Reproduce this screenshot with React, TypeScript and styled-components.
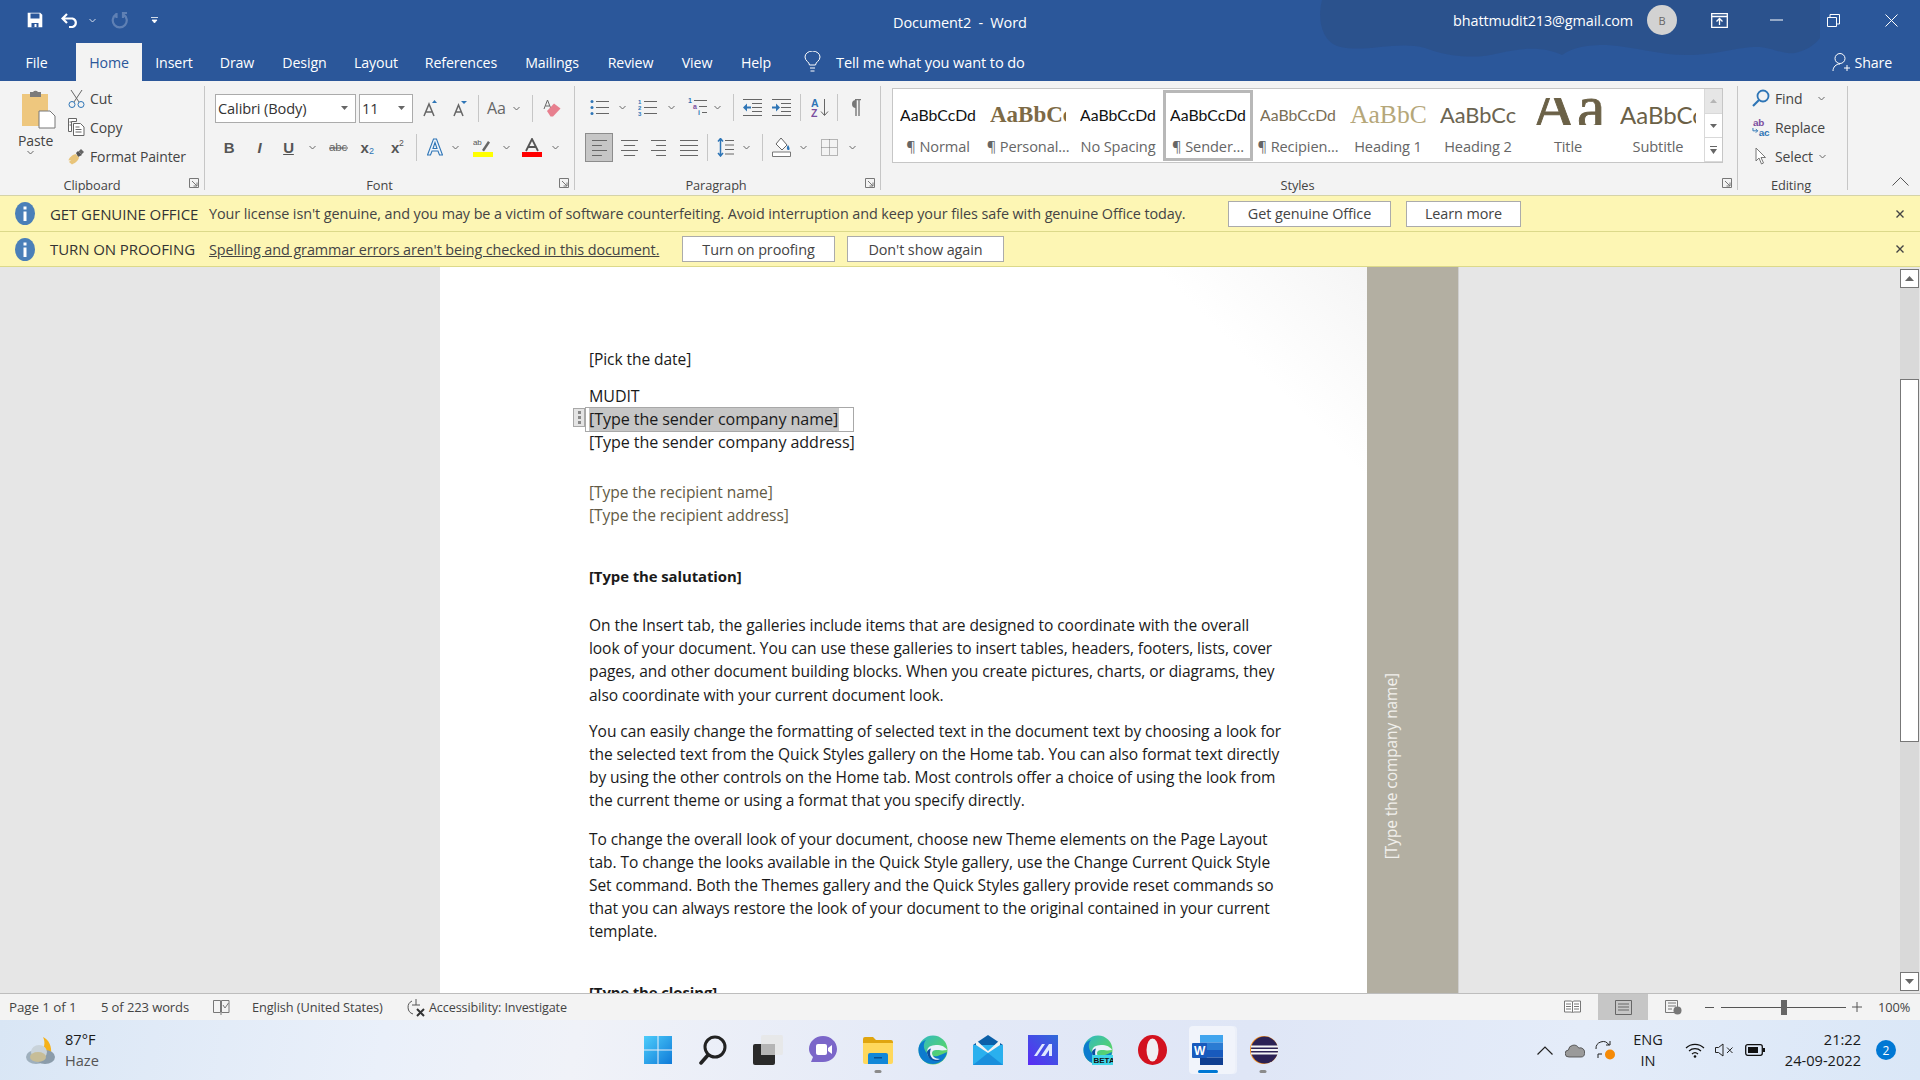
import styled, { createGlobalStyle } from 'styled-components'

const UI = `"Open Sans", "Noto Sans", sans-serif`

const Global = createGlobalStyle`
  html, body { margin: 0; padding: 0; background: #e6e6e6; }
  * { box-sizing: border-box; }
  body { font-family: ${UI}; overflow: hidden; }
`

const Window = styled.div`
  width: 1920px;
  height: 1080px;
  display: flex;
  flex-direction: column;
  overflow: hidden;
`

const Banner = styled.div`
  position: relative;
  background: #2b579a;
  flex: none;
  height: 81px;
  color: #fff;
`

const BannerArt = styled.svg`
  position: absolute;
  inset: 0;
`

const TitleRow = styled.div`
  position: relative;
  height: 43px;
  display: flex;
  align-items: center;
  padding-left: 27px;
  padding-bottom: 3px;
`

const Tool = styled.div<{ $w: number; $ml?: number; $h?: number; $on?: boolean; $flat?: boolean }>`
  flex: none;
  display: flex;
  align-items: center;
  justify-content: center;
  width: ${p => p.$w}px;
  height: ${p => (p.$h ? `${p.$h}px` : 'auto')};
  margin-left: ${p => p.$ml ?? 0}px;
  background: ${p => (p.$on ? '#c6c6c6' : 'transparent')};
  border: ${p => (p.$on && !p.$flat ? '1px solid #8c8c8c' : 'none')};
`

const DocName = styled.div`
  position: absolute;
  left: 893px;
  top: 13px;
  font-size: 14.5px;
  line-height: 20px;
  letter-spacing: -0.1px;
  white-space: pre;
`

const Account = styled.div`
  font-size: 14.4px;
  margin-left: auto;
  letter-spacing: -0.1px;
  white-space: nowrap;
`

const Avatar = styled.div`
  width: 30px;
  height: 30px;
  border-radius: 50%;
  background: #d2d2d2;
  color: #666;
  font-size: 11px;
  display: flex;
  align-items: center;
  justify-content: center;
  margin-left: 14px;
`

const TabRow = styled.div`
  position: relative;
  height: 38px;
  display: flex;
  align-items: stretch;
  font-size: 14.2px;
  letter-spacing: -0.12px;
`

const Tab = styled.div<{ $w: number; $ml?: number; $on?: boolean }>`
  width: ${p => p.$w}px;
  margin-left: ${p => p.$ml ?? 0}px;
  display: flex;
  align-items: center;
  justify-content: center;
  padding-top: 1px;
  background: ${p => (p.$on ? '#f3f3f3' : 'transparent')};
  color: ${p => (p.$on ? '#2b579a' : '#fff')};
`

const TellMe = styled.div`
  display: flex;
  align-items: center;
  margin-left: 18px;
  gap: 15px;
  white-space: nowrap;
  font-size: 14.6px;
`

const Share = styled.div`
  display: flex;
  align-items: center;
  gap: 3px;
  margin-left: auto;
  margin-right: 28px;
`

const Ribbon = styled.div`
  flex: none;
  height: 115px;
  background: #f3f3f3;
  border-bottom: 1px solid #d5d3a8;
  display: flex;
  padding-top: 5px;
  color: #444;
  font-size: 14px;
  letter-spacing: -0.12px;
`

const Group = styled.div<{ $w: number }>`
  position: relative;
  flex: none;
  width: ${p => p.$w}px;
  height: 104px;
  border-right: 1px solid #c6c6c6;
  display: flex;
  flex-direction: column;
`

const GroupLabel = styled.div<{ $pr: number }>`
  margin-top: auto;
  margin-bottom: -3px;
  height: 16px;
  line-height: 16px;
  font-size: 12.8px;
  letter-spacing: -0.1px;
  text-align: center;
  padding-right: ${p => p.$pr}px;
`

const Launcher = styled.svg`
  position: absolute;
  right: 5px;
  bottom: 2px;
`

const Row = styled.div<{ $mt: number }>`
  display: flex;
  align-items: center;
  height: 30px;
  margin-top: ${p => p.$mt}px;
`

const ClipBody = styled.div`
  display: flex;
`

const PasteCol = styled.div`
  width: 67px;
  flex: none;
  display: flex;
  flex-direction: column;
  align-items: center;
  padding-top: 4px;
`

const PasteLabel = styled.div`
  line-height: 16px;
  margin-top: 4px;
  margin-bottom: 1px;
  align-self: flex-start;
  padding-left: 18px;
`

const ActionCol = styled.div<{ $ml?: number }>`
  display: flex;
  flex-direction: column;
  gap: 5px;
  margin-left: ${p => p.$ml ?? 0}px;
`

const Action = styled.div`
  height: 24px;
  display: flex;
  align-items: center;
  white-space: nowrap;
`

const ActionIcon = styled.div`
  width: 18px;
  margin-right: 5px;
  display: flex;
  justify-content: center;
`

const Combo = styled.div<{ $w: number; $ml: number }>`
  width: ${p => p.$w}px;
  height: 29px;
  margin-left: ${p => p.$ml}px;
  background: #fff;
  border: 1px solid #ababab;
  display: flex;
  align-items: center;
  justify-content: space-between;
  padding: 0 7px 0 2px;
  font-size: 14.6px;
  color: #333;
`

const ToolSep = styled.div<{ $ml: number }>`
  width: 1px;
  height: 27px;
  background: #c6c6c6;
  flex: none;
  margin-left: ${p => p.$ml}px;
`

const Bold = styled.span<{ $ital?: boolean; $under?: boolean }>`
  font-family: "Liberation Sans", sans-serif;
  font-weight: 700;
  font-size: 15px;
  color: #555;
  font-style: ${p => (p.$ital ? 'italic' : 'normal')};
  text-decoration: ${p => (p.$under ? 'underline' : 'none')};
`

const ChangeCase = styled.span`
  font-size: 16px;
  color: #666;
`

const Gallery = styled.div`
  margin: 2px 0 0 11px;
  width: 831px;
  height: 75px;
  background: #fff;
  border: 1px solid #c6c6c6;
  display: flex;
`

const StyleItem = styled.div<{ $on?: boolean }>`
  width: 90px;
  flex: none;
  height: ${p => (p.$on ? '71px' : '73px')};
  margin-top: ${p => (p.$on ? '1px' : '0')};
  border: ${p => (p.$on ? '3px solid #b8b8b8' : '3px solid transparent')};
  display: flex;
  flex-direction: column;
  align-items: center;
  overflow: hidden;
  padding-top: ${p => (p.$on ? '5px' : '6px')};
`

const Sample = styled.div<{ $font?: string; $size: number; $color?: string; $weight?: number; $lh?: number; $clip?: boolean }>`
  height: 30px;
  width: 76px;
  flex: none;
  overflow: hidden;
  text-align: ${p => (p.$clip ? 'left' : 'center')};
  white-space: nowrap;
  font-family: ${p => p.$font ?? '"Lato", sans-serif'};
  font-size: ${p => p.$size}px;
  font-weight: ${p => p.$weight ?? 400};
  line-height: ${p => p.$lh ?? 34}px;
  letter-spacing: 0;
  color: ${p => p.$color ?? '#111'};
`

const TitleSample = styled(Sample)`
  height: 27px;
  margin-bottom: 3px;
  -webkit-text-stroke: 0.9px #6b6147;
`

const StyleName = styled.div`
  margin-top: 9px;
  font-size: 14.6px;
  line-height: 18px;
  color: #666;
  white-space: nowrap;
`

const GalleryScroll = styled.div`
  margin-left: auto;
  width: 18px;
  display: flex;
  flex-direction: column;
  gap: 1px;
  border-left: 1px solid #d9d9d9;
`

const GalleryBtn = styled.div<{ $h: number; $off?: boolean }>`
  height: ${p => p.$h}px;
  display: flex;
  align-items: center;
  justify-content: center;
  background: ${p => (p.$off ? '#e6e6e6' : '#fff')};
  border-bottom: 1px solid #d9d9d9;
`

const Collapse = styled.div`
  margin-left: 44px;
  align-self: flex-end;
  margin-bottom: 5px;
`

const NoticeBar = styled.div<{ $h: number }>`
  flex: none;
  height: ${p => p.$h}px;
  background: #fdf6b4;
  border-bottom: 1px solid #dcd98a;
  display: flex;
  align-items: center;
  padding-left: 15px;
  font-size: 14.4px;
  letter-spacing: -0.08px;
  color: #444;
`

const NoticeTitle = styled.div`
  margin-left: 15px;
  width: 159px;
  flex: none;
  color: #333;
  white-space: nowrap;
  font-size: 15px;
`

const NoticeText = styled.div<{ $link?: boolean; $w: number }>`
  width: ${p => p.$w}px;
  flex: none;
  white-space: nowrap;
  text-decoration: ${p => (p.$link ? 'underline' : 'none')};
`

const NoticeBtn = styled.div<{ $w: number; $ml: number }>`
  width: ${p => p.$w}px;
  margin-left: ${p => p.$ml}px;
  height: 26px;
  flex: none;
  background: #fff;
  border: 1px solid #ababab;
  display: flex;
  align-items: center;
  justify-content: center;
  white-space: nowrap;
`

const NoticeClose = styled.div`
  margin-left: auto;
  margin-right: 15px;
  display: flex;
`

const Workspace = styled.div`
  flex: 1;
  min-height: 0;
  display: flex;
  background: #e6e6e6;
`

const Page = styled.div`
  margin-left: 440px;
  width: 927px;
  flex: none;
  background: linear-gradient(225deg, #f5f5f5 0, #fff 150px);
  padding: 81px 0 0 149px;
  overflow: hidden;
  color: #1a1a1a;
  font-size: 15.55px;
  letter-spacing: -0.08px;
`

const Line = styled.div<{ $mt?: number; $color?: string; $bold?: boolean; $size?: number }>`
  line-height: 23px;
  height: 23px;
  margin-top: ${p => p.$mt ?? 0}px;
  color: ${p => p.$color ?? 'inherit'};
  font-weight: ${p => (p.$bold ? 700 : 400)};
  font-size: ${p => (p.$size ? `${p.$size}px` : 'inherit')};
  white-space: nowrap;
`

const Para = styled.div<{ $mt: number }>`
  margin-top: ${p => p.$mt}px;
  line-height: 23.2px;
  white-space: pre;
`

const Control = styled.div`
  position: relative;
  margin-left: -4px;
  padding-left: 3px;
  width: 269px;
  height: 25px;
  margin-top: -1px;
  margin-bottom: -1px;
  line-height: 23px;
  border: 1px solid #a8a8a8;
  font-size: 16.1px;
  white-space: nowrap;
`

const Selected = styled.span`
  display: inline-block;
  background: #c6c6c6;
  padding-right: 1px;
`

const Handle = styled.div`
  position: absolute;
  left: -13px;
  top: 0;
  width: 12px;
  height: 19px;
  background: #e4e4e4;
  border: 1px solid #a8a8a8;
  display: flex;
  flex-direction: column;
  align-items: center;
  justify-content: center;
  gap: 2px;

  i {
    width: 3px;
    height: 3px;
    background: #888;
  }
`

const Sidebar = styled.div`
  width: 92px;
  flex: none;
  background: #b3afa2;
  border-right: 1px solid #cfcfcf;
  padding: 406px 0 0 13px;
  color: #f1f0ec;
  font-size: 15.5px;
`

const SideText = styled.div`
  writing-mode: vertical-rl;
  transform: rotate(180deg);
  white-space: nowrap;
  letter-spacing: -0.08px;
`

const Scrollbar = styled.div`
  margin-left: auto;
  margin-right: 1px;
  width: 19px;
  margin-top: 2px;
  display: flex;
  flex-direction: column;
`

const ScrollBtn = styled.div`
  height: 19px;
  flex: none;
  background: #fff;
  border: 1px solid #777;
  display: flex;
  align-items: center;
  justify-content: center;
`

const Track = styled.div<{ $h: number }>`
  height: ${p => p.$h}px;
  background: #d9d9d9;
  flex: none;
`

const Thumb = styled.div`
  height: 363px;
  background: #fff;
  border: 1px solid #777;
  flex: none;
`

const StatusBar = styled.div`
  flex: none;
  height: 27px;
  background: #f3f3f3;
  border-top: 1px solid #bdbdbd;
  display: flex;
  align-items: center;
  font-size: 12.8px;
  letter-spacing: -0.1px;
  color: #444;
  white-space: nowrap;
`

const StatusItem = styled.div<{ $w: number; $ml?: number; $size?: number }>`
  width: ${p => p.$w}px;
  margin-left: ${p => p.$ml ?? 0}px;
  flex: none;
  display: flex;
  align-items: center;
  font-size: ${p => (p.$size ? `${p.$size}px` : 'inherit')};
`

const ZoomTrack = styled.div`
  position: relative;
  width: 125px;
  height: 1px;
  background: #555;
  margin-left: 7px;
`

const ZoomThumb = styled.div`
  position: absolute;
  left: 60px;
  top: -7px;
  width: 6px;
  height: 15px;
  background: #666;
`

const Taskbar = styled.div`
  flex: none;
  height: 60px;
  display: flex;
  align-items: center;
  background: linear-gradient(100deg, #d9e6f5 0, #eaf0fa 20%, #f0f2f8 30%, #e3e9f7 50%, #dfe6f6 65%, #e4ecf9 82%, #dae7f7 100%);
  color: #1a1a1a;
  font-size: 14.6px;
`

const Weather = styled.div`
  width: 630px;
  flex: none;
  display: flex;
  align-items: center;
  padding-left: 26px;
  gap: 10px;
`

const WeatherText = styled.div`
  line-height: 21px;
  span {
    display: block;
    color: #555;
  }
`

const Slot = styled.div`
  position: relative;
  width: 55px;
  height: 60px;
  flex: none;
  display: flex;
  align-items: center;
  justify-content: center;
`

const ActiveTile = styled.div`
  position: absolute;
  left: 9px;
  top: 6px;
  width: 46px;
  height: 48px;
  background: rgba(255, 255, 255, 0.55);
  border-radius: 4px;
  box-shadow: 2px 0 0 rgba(255, 255, 255, 0.4);
`

const Dot = styled.div<{ $active?: boolean }>`
  position: absolute;
  bottom: 7px;
  left: 50%;
  transform: translateX(-50%);
  width: ${p => (p.$active ? '20px' : '7px')};
  height: 3px;
  border-radius: 2px;
  background: ${p => (p.$active ? '#0078d4' : '#8b8b8b')};
`

const SlotIcon = styled.div`
  position: relative;
  display: flex;
`

const BetaTag = styled.svg`
  position: absolute;
  left: 9px;
  bottom: 0;
`

const Tray = styled.div`
  margin-left: auto;
  display: flex;
  align-items: center;
  padding-right: 24px;
`

const TrayItem = styled.div<{ $ml: number; $w: number }>`
  margin-left: ${p => p.$ml}px;
  width: ${p => p.$w}px;
  flex: none;
  display: flex;
  justify-content: center;
`

const Lang = styled.div<{ $ml: number }>`
  margin-left: ${p => p.$ml}px;
  width: 30px;
  text-align: center;
  line-height: 21px;
`

const Clock = styled.div`
  margin-left: 6px;
  width: 90px;
  text-align: right;
  line-height: 21px;
  white-space: nowrap;
`

const Badge = styled.div`
  margin-left: 15px;
  width: 20px;
  height: 20px;
  border-radius: 50%;
  background: #0078d4;
  color: #fff;
  font-size: 12px;
  display: flex;
  align-items: center;
  justify-content: center;
`

const Chev = ({ ml = 0, c = '#666' }: { ml?: number; c?: string }) => (
  <Tool $w={7} $ml={ml}>
    <svg width="7" height="5" viewBox="0 0 7 5"><path d="M.5 1 3.5 4 6.5 1" fill="none" stroke={c} /></svg>
  </Tool>
)

const Caret = () => (
  <svg width="7" height="4" viewBox="0 0 7 4"><path d="M0 0h7L3.500 4z" fill="#666" /></svg>
)

const Launch = () => (
  <Launcher width="10" height="10" viewBox="0 0 10 10">
    <path d="M.5.5h9v9h-9zM3 3l5 5M8 4.500V8H4.500" fill="none" stroke="#777" />
  </Launcher>
)

const Lines = ({ n, w, s = 5, c = '#666', align = 'left' }: { n: number; w: number; s?: number; c?: string; align?: string }) => (
  <>
    {Array.from({ length: n }).map((_, i) => {
      const short = i % 2 === 1 && align !== 'just'
      const len = short ? w * 0.66 : w
      const x0 = align === 'center' ? (w - len) / 2 : align === 'right' ? w - len : 0
      return <path key={i} d={`M${x0} ${i * s + 1.5}h${len}`} stroke={c} strokeWidth="1" />
    })}
  </>
)

const AlignIcon = ({ align, w }: { align: string; w: number }) => (
  <svg width={w} height="17" viewBox={`0 0 ${w} 17`}><Lines n={4} w={w} align={align} /></svg>
)

const InfoIcon = () => (
  <svg width="20" height="23" viewBox="0 0 20 23"><ellipse cx="10" cy="11.500" rx="10" ry="11.500" fill="#4a7fb8" /><path d="M8.500 9.500h3V19h-3zM8.500 4.500h3v3h-3z" fill="#fff" /></svg>
)

const CloseX = () => (
  <svg width="10" height="10" viewBox="0 0 10 10"><path d="M1.500 1.500l7 7M8.500 1.500l-7 7" stroke="#444" strokeWidth="1.400" /></svg>
)

const EdgeIcon = ({ beta }: { beta?: boolean }) => (
  <svg width="30" height="30" viewBox="0 0 30 30">
    <defs>
      <linearGradient id={beta ? 'eb' : 'ea'} x1="0" y1="0" x2="1" y2="1">
        <stop offset="0" stopColor="#2fb7c9" /><stop offset=".6" stopColor="#4fcf7a" /><stop offset="1" stopColor="#7ad94f" />
      </linearGradient>
    </defs>
    <circle cx="15" cy="15" r="14.500" fill={`url(#${beta ? 'eb' : 'ea'})`} />
    <path d="M29 17c-1 7-7 12-14 12C7 29 .5 23 .5 15 .5 9 4 6 8 5c-3 3-3 9 1 13 4 4 10 4 13 2 3-1 5-2 7-3z" fill="#0c7bce" />
    <path d="M13 11c-4 1-5 6-3 10 2 4 8 5 12 3-5 0-8-3-8-6 0-2 2-3 4-3 3 0 5 1 11 0 0-1-4-5-9-5-3 0-5 0-7 1z" fill="#eaf1fb" />
    <path d="M9 17c0 5 4 9 9 9 2 0 4-.5 5-1.500-3 1-8 1-10-3-1.500-2-1-6 0-8-2 .5-4 2-4 3.500z" fill="#0a4f9e" />
  </svg>
)

function App() {
  return (
    <Window>
      <Global />
      <Banner>
        <BannerArt width="1920" height="81" viewBox="0 0 1920 81">
          <path d="M1322 0c-5 20 0 40 15 46 25 8 60-6 88 2 20 8 50 12 75 5 25-6 45-6 62 2 12-8 25-10 45-10 30 2 50 10 80 10 30 0 50-8 70-8 15 0 25 8 38 6 10-2 20-8 25-15V0z" fill="#2c4f86" opacity=".6" />
        </BannerArt>
        <TitleRow>
          <Tool $w={16}>
            <svg width="16" height="16" viewBox="0 0 16 16"><path d="M.7.7h12.500l2.100 2.100v12.500H.7z" fill="#fff" /><path d="M3.500 1.500h9v5h-9z" fill="#2b579a" /><path d="M4.500 11h7v4.500h-7z" fill="#2b579a" /><path d="M7.500 12h2v3h-2z" fill="#fff" /></svg>
          </Tool>
          <Tool $w={19} $ml={18}>
            <svg width="19" height="16" viewBox="0 0 19 16"><path d="M1.500 6.500h10a5 4.500 0 0 1 0 8.500H8M6 2 1.500 6.500 6 11" fill="none" stroke="#fff" strokeWidth="2.200" /></svg>
          </Tool>
          <Chev ml={9} c="#d5deec" />
          <Tool $w={17} $ml={15}>
            <svg width="17" height="17" viewBox="0 0 17 17"><path d="M5 2.500a7 7 0 1 0 7.500 0M5.500 1v5M12 6V1h4" fill="none" stroke="#5f80b4" strokeWidth="2.200" /></svg>
          </Tool>
          <Tool $w={7} $ml={23}>
            <svg width="7" height="9" viewBox="0 0 7 9"><path d="M0 1.500h7M1 4h5L3.500 7z" fill="#fff" stroke="#fff" strokeWidth=".8" /></svg>
          </Tool>
          <DocName>Document2  -  Word</DocName>
          <Account>bhattmudit213@gmail.com</Account>
          <Avatar>B</Avatar>
          <Tool $w={17} $ml={34}>
            <svg width="17" height="15" viewBox="0 0 17 15"><path d="M.7.7h15.600v13.600H.7zM.7 3.500h15.600" fill="none" stroke="#fff" strokeWidth="1.300" /><path d="M8.500 12V6M5.500 8.500l3-3 3 3" fill="none" stroke="#fff" strokeWidth="1.300" /></svg>
          </Tool>
          <Tool $w={13} $ml={42}>
            <svg width="13" height="2" viewBox="0 0 13 2"><path d="M0 1h13" stroke="#fff" /></svg>
          </Tool>
          <Tool $w={13} $ml={44}>
            <svg width="13" height="13" viewBox="0 0 13 13"><path d="M.5 3.500h9v9h-9zM3 3.500V.5h9.500V10H9.500" fill="none" stroke="#fff" /></svg>
          </Tool>
          <Tool $w={13} $ml={45}>
            <svg width="13" height="13" viewBox="0 0 13 13"><path d="M.5.5l12 12M12.500.5l-12 12" stroke="#fff" /></svg>
          </Tool>
          <Tool $w={22} />
        </TitleRow>
        <TabRow>
          <Tab $w={49} $ml={12}>File</Tab>
          <Tab $w={66} $ml={15} $on>Home</Tab>
          <Tab $w={64}>Insert</Tab>
          <Tab $w={62}>Draw</Tab>
          <Tab $w={73}>Design</Tab>
          <Tab $w={70}>Layout</Tab>
          <Tab $w={100}>References</Tab>
          <Tab $w={82}>Mailings</Tab>
          <Tab $w={75}>Review</Tab>
          <Tab $w={58}>View</Tab>
          <Tab $w={60}>Help</Tab>
          <TellMe>
            <svg width="17" height="22" viewBox="0 0 17 22"><path d="M5.500 14c0-3-4.500-4-4.500-8a7.500 6 0 0 1 15 0c0 4-4.500 5-4.500 8zM6 17h5M6.500 20h4" fill="none" stroke="#fff" /></svg>
            Tell me what you want to do
          </TellMe>
          <Share>
            <svg width="19" height="20" viewBox="0 0 19 20"><circle cx="8" cy="6.500" r="5" fill="none" stroke="#fff" /><path d="M1 19c0-4 3-7 7-7M12 16h6M15 13v6" fill="none" stroke="#fff" /></svg>
            Share
          </Share>
        </TabRow>
      </Banner>

      <Ribbon>
        <Group $w={205}>
          <ClipBody>
            <PasteCol>
              <svg width="34" height="39" viewBox="0 0 34 39" style={{ marginLeft: 11 }}>
                <path d="M0 4h26v32H0z" fill="#eec77e" />
                <path d="M8 2h3a3 3 0 0 1 5 0h3v5H8z" fill="#7b7b7b" />
                <path d="M17 21h11l5 5v12H17z" fill="#fff" stroke="#777" />
              </svg>
              <PasteLabel>Paste</PasteLabel>
              <Chev ml={-6} />
            </PasteCol>
            <ActionCol>
              <Action>
                <ActionIcon>
                  <svg width="17" height="19" viewBox="0 0 17 19"><path d="M3 1l8 12M14 1 6 13" stroke="#666" fill="none" /><circle cx="4" cy="15.500" r="3" fill="none" stroke="#2e75b6" /><circle cx="13" cy="15.500" r="3" fill="none" stroke="#2e75b6" /></svg>
                </ActionIcon>
                Cut
              </Action>
              <Action>
                <ActionIcon>
                  <svg width="17" height="18" viewBox="0 0 17 18"><path d="M.5.5h8v3h-5v10h-3zM5.500 5.500h7l3.500 3.500v8.500H5.500zM7.500 9h4M7.500 11.500h6M7.500 14h6M1.500 4h2M1.500 7h2" fill="#fff" stroke="#666" /></svg>
                </ActionIcon>
                Copy
              </Action>
              <Action>
                <ActionIcon>
                  <svg width="17" height="17" viewBox="0 0 17 17"><path d="M10 3l4 4-4 2-2-4z" fill="#555" /><path d="M13 1l3 3-2.500 2.500-3-3z" fill="#666" /><path d="M7.500 6l3.500 3.500c-1 4-5 6-7 7L1 14l2-2-2.500.5C1 10 4 7 7.500 6z" fill="#e8c47a" /></svg>
                </ActionIcon>
                Format Painter
              </Action>
            </ActionCol>
          </ClipBody>
          <GroupLabel $pr={20}>Clipboard</GroupLabel>
          <Launch />
        </Group>

        <Group $w={370}>
          <Row $mt={7}>
            <Combo $w={141} $ml={10}>Calibri (Body)<Caret /></Combo>
            <Combo $w={54} $ml={3}>11<Caret /></Combo>
            <Tool $w={15} $ml={10}>
              <svg width="15" height="17" viewBox="0 0 15 17"><path d="M1 16 6 4l5 12M3 12h6" fill="none" stroke="#666" strokeWidth="1.500" /><path d="M9 3l2.500-3L14 3z" fill="#2e75b6" /></svg>
            </Tool>
            <Tool $w={14} $ml={15}>
              <svg width="14" height="17" viewBox="0 0 14 17"><path d="M1 16 5.500 5 10 16M2.500 12h6" fill="none" stroke="#666" strokeWidth="1.500" /><path d="M8 1h6l-3 3z" fill="#2e75b6" /></svg>
            </Tool>
            <ToolSep $ml={11} />
            <Tool $w={17} $ml={9}><ChangeCase>Aa</ChangeCase></Tool>
            <Chev ml={8} />
            <ToolSep $ml={12} />
            <Tool $w={18} $ml={10}>
              <svg width="18" height="18" viewBox="0 0 18 18"><path d="M1 10 4.500 1 8 10M2.500 7h4" fill="none" stroke="#666" /><path d="M4 12l7-7.500 6.500 5L10 17.500H7.500z" fill="#e77f8e" /></svg>
            </Tool>
          </Row>
          <Row $mt={9}>
            <Tool $w={10} $ml={19}><Bold>B</Bold></Tool>
            <Tool $w={9} $ml={21}><Bold $ital>I</Bold></Tool>
            <Tool $w={11} $ml={19}><Bold $under>U</Bold></Tool>
            <Chev ml={15} />
            <Tool $w={19} $ml={13}>
              <svg width="19" height="10" viewBox="0 0 19 10"><text x="0" y="9" fontSize="11.500" fill="#666" fontFamily="Liberation Sans">abc</text><path d="M0 6h19" stroke="#555" /></svg>
            </Tool>
            <Tool $w={15} $ml={12}>
              <Bold>x</Bold><svg width="6" height="16" viewBox="0 0 6 16"><text x="0" y="15" fontSize="9" fill="#2e75b6" fontFamily="Liberation Sans">2</text></svg>
            </Tool>
            <Tool $w={14} $ml={16}>
              <Bold>x</Bold><svg width="6" height="16" viewBox="0 0 6 16"><text x="0" y="7" fontSize="9" fill="#555" fontFamily="Liberation Sans">2</text></svg>
            </Tool>
            <ToolSep $ml={11} />
            <Tool $w={16} $ml={10}>
              <svg width="16" height="18" viewBox="0 0 16 18"><path d="M6.500 1h3L15.500 17h-3l-1.500-4H5l-1.500 4H.5zM6 10.500h4L8 4.500z" fill="#eef4fb" fillRule="evenodd" stroke="#2e75b6" strokeWidth="1.100" /></svg>
            </Tool>
            <Chev ml={9} />
            <Tool $w={20} $ml={14}>
              <svg width="20" height="19" viewBox="0 0 20 19"><text x="0" y="7" fontSize="8" fill="#555" fontFamily="Liberation Sans">ab</text><path d="M9 12l6-9 2 1.500-6 9z" fill="#666" /><path d="M0 14h20v5H0z" fill="#ffff00" /></svg>
            </Tool>
            <Chev ml={10} />
            <Tool $w={20} $ml={12}>
              <svg width="20" height="19" viewBox="0 0 20 19"><path d="M4 13 10 1l6 12M6 9h8" fill="none" stroke="#555" strokeWidth="1.800" /><path d="M0 14h20v5H0z" fill="#ff0000" /></svg>
            </Tool>
            <Chev ml={10} />
          </Row>
          <GroupLabel $pr={20}>Font</GroupLabel>
          <Launch />
        </Group>

        <Group $w={306}>
          <Row $mt={6}>
            <Tool $w={19} $ml={15}>
              <svg width="19" height="17" viewBox="0 0 19 17"><path d="M6 2.500h13M6 8.500h13M6 14.500h13" stroke="#666" /><circle cx="2" cy="2.500" r="1.500" fill="#2e75b6" /><circle cx="2" cy="8.500" r="1.500" fill="#2e75b6" /><circle cx="2" cy="14.500" r="1.500" fill="#2e75b6" /></svg>
            </Tool>
            <Chev ml={10} />
            <Tool $w={19} $ml={12}>
              <svg width="19" height="17" viewBox="0 0 19 17"><path d="M6 2.500h13M6 8.500h13M6 14.500h13" stroke="#666" /><g fontSize="6" fill="#2e75b6" fontFamily="Liberation Sans" fontWeight="700"><text x="0" y="5">1</text><text x="0" y="11">2</text><text x="0" y="17">3</text></g></svg>
            </Tool>
            <Chev ml={11} />
            <Tool $w={19} $ml={13}>
              <svg width="19" height="18" viewBox="0 0 19 18"><path d="M6 2.500h13M11 8.500h8M14 14.500h5" stroke="#666" /><g fontSize="7" fontFamily="Liberation Sans" fontWeight="700" fill="#2e75b6"><text x="0" y="5">1</text><text x="5" y="11" fill="#7a4e9e">a</text><text x="10" y="17">i</text></g></svg>
            </Tool>
            <Chev ml={7} />
            <ToolSep $ml={12} />
            <Tool $w={19} $ml={9}>
              <svg width="19" height="17" viewBox="0 0 19 17"><path d="M0 .5h19M9 4.500h10M9 8.500h10M9 12.500h10M0 16.500h19" stroke="#666" /><path d="M0 8.500l4-4v3h4v2H4v3z" fill="#2e75b6" /></svg>
            </Tool>
            <Tool $w={19} $ml={10}>
              <svg width="19" height="17" viewBox="0 0 19 17"><path d="M0 .5h19M9 4.500h10M9 8.500h10M9 12.500h10M0 16.500h19" stroke="#666" /><path d="M8 8.500l-4-4v3H0v2h4v3z" fill="#2e75b6" /></svg>
            </Tool>
            <ToolSep $ml={9} />
            <Tool $w={18} $ml={10}>
              <svg width="18" height="19" viewBox="0 0 18 19"><g fontFamily="Liberation Sans" fontWeight="700" fontSize="10.500"><text x="0" y="9" fill="#2e75b6">A</text><text x="0" y="19" fill="#7a4e9e">Z</text></g><path d="M13.500 1v16M10 13.500l3.500 4 3.500-4" fill="none" stroke="#666" /></svg>
            </Tool>
            <ToolSep $ml={8} />
            <Tool $w={11} $ml={12}>
              <svg width="11" height="17" viewBox="0 0 11 17"><path d="M5 .5h6M9 .5V17M6 .5V17" stroke="#777" fill="none" strokeWidth="1.400" /><path d="M6 1a4 4 0 0 0 0 8z" fill="#777" /></svg>
            </Tool>
          </Row>
          <Row $mt={10}>
            <Tool $w={28} $h={29} $ml={10} $on><AlignIcon align="left" w={15} /></Tool>
            <Tool $w={17} $ml={8}><AlignIcon align="center" w={17} /></Tool>
            <Tool $w={15} $ml={13}><AlignIcon align="right" w={15} /></Tool>
            <Tool $w={18} $ml={14}><AlignIcon align="just" w={18} /></Tool>
            <ToolSep $ml={9} />
            <Tool $w={17} $ml={9}>
              <svg width="17" height="19" viewBox="0 0 17 19"><path d="M8 2.500h9M8 7h9M8 11.500h9M8 16h9" stroke="#666" /><path d="M3.500 1v17M1 3.500l2.500-3 2.500 3M1 15l2.500 3 2.500-3" fill="none" stroke="#2e75b6" strokeWidth="1.500" /></svg>
            </Tool>
            <Chev ml={9} />
            <ToolSep $ml={12} />
            <Tool $w={19} $ml={9}>
              <svg width="19" height="20" viewBox="0 0 19 20"><path d="M9 1l6 7-5 5-6-6z" fill="#fff" stroke="#666" /><path d="M16 8c2 3 2 5 .5 5S14 11 16 8z" fill="#2e75b6" /><path d="M.5 15h18v4.500H.5z" fill="#fff" stroke="#777" /></svg>
            </Tool>
            <Chev ml={9} />
            <Tool $w={17} $ml={14}>
              <svg width="17" height="17" viewBox="0 0 17 17"><path d="M.5.500h16v16H.5zM8.500.500v16M.5 8.500h16" fill="none" stroke="#777" strokeDasharray="1 1" /></svg>
            </Tool>
            <Chev ml={11} />
          </Row>
          <GroupLabel $pr={23}>Paragraph</GroupLabel>
          <Launch />
        </Group>

        <Group $w={857}>
          <Gallery>
            <StyleItem>
              <Sample $size={15.8}>AaBbCcDd</Sample>
              <StyleName>¶ Normal</StyleName>
            </StyleItem>
            <StyleItem>
              <Sample $font='"Liberation Serif", serif' $size={23} $weight={700} $color="#7d6a45" $clip>AaBbCc</Sample>
              <StyleName>¶ Personal...</StyleName>
            </StyleItem>
            <StyleItem>
              <Sample $size={15.8}>AaBbCcDd</Sample>
              <StyleName>No Spacing</StyleName>
            </StyleItem>
            <StyleItem $on>
              <Sample $size={15.8}>AaBbCcDd</Sample>
              <StyleName>¶ Sender...</StyleName>
            </StyleItem>
            <StyleItem>
              <Sample $size={15.8} $color="#7a6e55">AaBbCcDd</Sample>
              <StyleName>¶ Recipien...</StyleName>
            </StyleItem>
            <StyleItem>
              <Sample $font='"Liberation Serif", serif' $size={25.6} $color="#b5a77a">AaBbC</Sample>
              <StyleName>Heading 1</StyleName>
            </StyleItem>
            <StyleItem>
              <Sample $size={21.8} $color="#6b6451">AaBbCc</Sample>
              <StyleName>Heading 2</StyleName>
            </StyleItem>
            <StyleItem>
              <TitleSample $font='"Liberation Serif", serif' $size={64} $color="#6b6147" $lh={20}>Aa</TitleSample>
              <StyleName>Title</StyleName>
            </StyleItem>
            <StyleItem>
              <Sample $size={24} $color="#6b6147" $clip>AaBbCc</Sample>
              <StyleName>Subtitle</StyleName>
            </StyleItem>
            <GalleryScroll>
              <GalleryBtn $h={25} $off>
                <svg width="7" height="4" viewBox="0 0 7 4"><path d="M3.500 0 7 4H0z" fill="#b5b5b5" /></svg>
              </GalleryBtn>
              <GalleryBtn $h={23}><Caret /></GalleryBtn>
              <GalleryBtn $h={23}>
                <svg width="7" height="8" viewBox="0 0 7 8"><path d="M0 0h7v1H0zM0 3h7L3.500 8z" fill="#666" /></svg>
              </GalleryBtn>
            </GalleryScroll>
          </Gallery>
          <GroupLabel $pr={23}>Styles</GroupLabel>
          <Launch />
        </Group>

        <Group $w={110}>
          <ActionCol $ml={14}>
            <Action>
              <ActionIcon>
                <svg width="18" height="18" viewBox="0 0 18 18"><circle cx="11" cy="7" r="5.500" fill="none" stroke="#2e75b6" strokeWidth="1.800" /><path d="M7 11 1 17" stroke="#2e75b6" strokeWidth="2.200" /></svg>
              </ActionIcon>
              Find
              <Chev ml={16} />
            </Action>
            <Action>
              <ActionIcon>
                <svg width="19" height="19" viewBox="0 0 19 19"><g fontSize="10.500" fontWeight="700" fontFamily="Liberation Sans"><text x="1" y="8" fill="#7a4e9e">ab</text><text x="7" y="18" fill="#2e75b6">ac</text></g><path d="M1 10v3h5M4 11l2 2-2 2" fill="none" stroke="#2e75b6" /></svg>
              </ActionIcon>
              Replace
            </Action>
            <Action>
              <ActionIcon>
                <svg width="12" height="18" viewBox="0 0 12 18"><path d="M1 1v13l3-3 2.500 6 2-1-2.500-5.500h4.500z" fill="#fff" stroke="#777" /></svg>
              </ActionIcon>
              Select
              <Chev ml={6} />
            </Action>
          </ActionCol>
          <GroupLabel $pr={3}>Editing</GroupLabel>
        </Group>
        <Collapse>
          <svg width="17" height="9" viewBox="0 0 17 9"><path d="M.5 8.500l8-8 8 8" fill="none" stroke="#555" /></svg>
        </Collapse>
      </Ribbon>

      <NoticeBar $h={36}>
        <InfoIcon />
        <NoticeTitle>GET GENUINE OFFICE</NoticeTitle>
        <NoticeText $w={1019}>Your license isn't genuine, and you may be a victim of software counterfeiting. Avoid interruption and keep your files safe with genuine Office today.</NoticeText>
        <NoticeBtn $w={163} $ml={0}>Get genuine Office</NoticeBtn>
        <NoticeBtn $w={115} $ml={15}>Learn more</NoticeBtn>
        <NoticeClose><CloseX /></NoticeClose>
      </NoticeBar>
      <NoticeBar $h={35}>
        <InfoIcon />
        <NoticeTitle>TURN ON PROOFING</NoticeTitle>
        <NoticeText $w={473} $link>Spelling and grammar errors aren't being checked in this document.</NoticeText>
        <NoticeBtn $w={153} $ml={0}>Turn on proofing</NoticeBtn>
        <NoticeBtn $w={157} $ml={12}>Don't show again</NoticeBtn>
        <NoticeClose><CloseX /></NoticeClose>
      </NoticeBar>

      <Workspace>
        <Page>
          <Line>[Pick the date]</Line>
          <Line $mt={14} $size={16}>MUDIT</Line>
          <Control>
            <Handle><i /><i /><i /></Handle>
            <Selected>[Type the sender company name]</Selected>
          </Control>
          <Line $size={16.1}>[Type the sender company address]</Line>
          <Line $mt={27} $color="#625a45">[Type the recipient name]</Line>
          <Line $color="#625a45">[Type the recipient address]</Line>
          <Line $mt={38} $bold $size={14.9}>[Type the salutation]</Line>
          <Para $mt={26}>{`On the Insert tab, the galleries include items that are designed to coordinate with the overall
look of your document. You can use these galleries to insert tables, headers, footers, lists, cover
pages, and other document building blocks. When you create pictures, charts, or diagrams, they
also coordinate with your current document look.`}</Para>
          <Para $mt={13}>{`You can easily change the formatting of selected text in the document text by choosing a look for
the selected text from the Quick Styles gallery on the Home tab. You can also format text directly
by using the other controls on the Home tab. Most controls offer a choice of using the look from
the current theme or using a format that you specify directly.`}</Para>
          <Para $mt={15}>{`To change the overall look of your document, choose new Theme elements on the Page Layout
tab. To change the looks available in the Quick Style gallery, use the Change Current Quick Style
Set command. Both the Themes gallery and the Quick Styles gallery provide reset commands so
that you can always restore the look of your document to the original contained in your current
template.`}</Para>
          <Line $mt={37} $bold $size={14.9}>[Type the closing]</Line>
        </Page>
        <Sidebar>
          <SideText>[Type the company name]</SideText>
        </Sidebar>
        <Scrollbar>
          <ScrollBtn>
            <svg width="9" height="5" viewBox="0 0 9 5"><path d="M4.500 0 9 5H0z" fill="#666" /></svg>
          </ScrollBtn>
          <Track $h={91} />
          <Thumb />
          <Track $h={230} />
          <ScrollBtn>
            <svg width="9" height="5" viewBox="0 0 9 5"><path d="M0 0h9L4.500 5z" fill="#666" /></svg>
          </ScrollBtn>
        </Scrollbar>
      </Workspace>

      <StatusBar>
        <StatusItem $w={92} $ml={9} $size={13.4}>Page 1 of 1</StatusItem>
        <StatusItem $w={112} $size={13}>5 of 223 words</StatusItem>
        <StatusItem $w={39}>
          <svg width="18" height="15" viewBox="0 0 18 15"><path d="M.5.500h7v12h-7zM8.500.500h7.500v12H8.500zM10 5l2 3 3.500-5M8 13v2" fill="none" stroke="#777" /></svg>
        </StatusItem>
        <StatusItem $w={155}>English (United States)</StatusItem>
        <StatusItem $w={22}>
          <svg width="19" height="19" viewBox="0 0 19 19"><path d="M5 3a7 7 0 0 0 1 13M9 1v6M5 7h8" fill="none" stroke="#555" /><path d="M10 11l7 7M17 11l-7 7" stroke="#333" strokeWidth="2" /></svg>
        </StatusItem>
        <StatusItem $w={140} $size={12.6}>Accessibility: Investigate</StatusItem>
        <StatusItem $w={17} $ml={995}>
          <svg width="17" height="14" viewBox="0 0 17 14"><path d="M.5 1h7l1 1 1-1h7v11h-7l-1 1-1-1h-7zM8.500 2v10M2 4h5M2 6.500h5M2 9h5M10 4h5M10 6.500h5M10 9h5" fill="#fff" stroke="#777" /></svg>
        </StatusItem>
        <Tool $w={50} $h={26} $ml={17} $on $flat>
          <svg width="17" height="15" viewBox="0 0 17 15"><path d="M.5.500h16v14H.5zM3 4h11M3 7h11M3 10h11" fill="none" stroke="#666" /></svg>
        </Tool>
        <StatusItem $w={17} $ml={17}>
          <svg width="17" height="15" viewBox="0 0 17 15"><path d="M.5.500h12v12H.5zM3 3h8M3 6h8M3 9h4" fill="none" stroke="#777" /><circle cx="12.500" cy="10.500" r="4" fill="#777" /></svg>
        </StatusItem>
        <StatusItem $w={9} $ml={23}>
          <svg width="9" height="1" viewBox="0 0 9 1"><path d="M0 .5h9" stroke="#555" /></svg>
        </StatusItem>
        <ZoomTrack><ZoomThumb /></ZoomTrack>
        <StatusItem $w={10} $ml={6}>
          <svg width="10" height="10" viewBox="0 0 10 10"><path d="M0 5h10M5 0v10" stroke="#555" /></svg>
        </StatusItem>
        <StatusItem $w={40} $ml={16}>100%</StatusItem>
      </StatusBar>

      <Taskbar>
        <Weather>
          <svg width="29" height="27" viewBox="0 0 29 27">
            <path d="M17 0c6 3 9 9 8 17l-11-1c4-4 6-10 3-16z" fill="#f5b21b" />
            <ellipse cx="10" cy="20" rx="10" ry="7" fill="#9fb0bd" />
            <ellipse cx="19" cy="20" rx="10" ry="7" fill="#8b9caa" />
            <ellipse cx="13" cy="15" rx="8" ry="7" fill="#c9d3da" />
            <ellipse cx="12" cy="20" rx="8" ry="5" fill="#c7bd97" />
          </svg>
          <WeatherText>
            87°F
            <span>Haze</span>
          </WeatherText>
        </Weather>

        <Slot>
          <svg width="30" height="30" viewBox="0 0 30 30">
            <defs><linearGradient id="win" x1="0" y1="0" x2="1" y2="1"><stop offset="0" stopColor="#4dcdfb" /><stop offset="1" stopColor="#0f7ad8" /></linearGradient></defs>
            <path d="M1 1h13.500v13.500H1zM15.500 1H29v13.500H15.500zM1 15.500h13.500V29H1zM15.500 15.500H29V29H15.500z" fill="url(#win)" />
          </svg>
        </Slot>
        <Slot>
          <svg width="28" height="30" viewBox="0 0 28 30"><circle cx="16" cy="12" r="10" fill="none" stroke="#222" strokeWidth="3" /><path d="M9 20 2 28" stroke="#222" strokeWidth="3.500" strokeLinecap="round" /></svg>
        </Slot>
        <Slot>
          <svg width="30" height="30" viewBox="0 0 30 30"><rect x="0" y="9" width="22" height="21" rx="2" fill="#2a2a2a" /><rect x="8" y="0" width="22" height="20" rx="2" fill="#e7e7e7" opacity=".9" /><rect x="8" y="9" width="14" height="11" fill="#b5b5b5" /></svg>
        </Slot>
        <Slot>
          <svg width="30" height="30" viewBox="0 0 30 30"><path d="M15 1c8 0 14 6 14 13s-6 13-14 13H3l2-5C2 19 1 17 1 14 1 7 7 1 15 1z" fill="#7b66c9" /><rect x="8" y="9" width="11" height="11" rx="2" fill="#fff" /><path d="M20 13l4-3v9l-4-3z" fill="#fff" /></svg>
        </Slot>
        <Slot>
          <SlotIcon>
            <svg width="30" height="28" viewBox="0 0 30 28"><path d="M0 3a2 2 0 0 1 2-2h8l3 3h15a2 2 0 0 1 2 2v3H0z" fill="#e0a50f" /><path d="M0 7h30v19a2 2 0 0 1-2 2H2a2 2 0 0 1-2-2z" fill="#ffd85c" /><path d="M5 19a2 2 0 0 1 2-2h16a2 2 0 0 1 2 2v9H5z" fill="#1287d8" /><path d="M11 21h8v1.500h-8z" fill="#0a4f8f" /></svg>
          </SlotIcon>
          <Dot />
        </Slot>
        <Slot><EdgeIcon /></Slot>
        <Slot>
          <svg width="30" height="30" viewBox="0 0 30 30"><path d="M15 0 30 10v20H0V10z" fill="#0b5fa8" /><path d="M0 10h30v20H0z" fill="#2ab0ee" /><path d="M3 5 15 16 27 5v5L15 18 3 10z" fill="#f2f2f2" /><path d="M0 30 15 18l15 12z" fill="#1a8fdc" /></svg>
        </Slot>
        <Slot>
          <svg width="30" height="30" viewBox="0 0 30 30">
            <defs><linearGradient id="mx" x1="0" y1="1" x2="1" y2="0"><stop offset="0" stopColor="#5b2bf5" /><stop offset="1" stopColor="#2f6bd8" /></linearGradient></defs>
            <rect width="30" height="30" fill="url(#mx)" />
            <path d="M6 21 14 9h3L9 21zM13 21l8-12h3v12h-3v-6l-4 6z" fill="#dfe8ff" />
          </svg>
        </Slot>
        <Slot>
          <SlotIcon>
            <EdgeIcon beta />
            <BetaTag width="21" height="10" viewBox="0 0 21 10">
              <rect width="21" height="10" fill="#3fd4e8" />
              <text x="1.500" y="8" fontSize="8" fontWeight="700" fill="#111" fontFamily="Liberation Sans">BETA</text>
            </BetaTag>
          </SlotIcon>
        </Slot>
        <Slot>
          <svg width="29" height="30" viewBox="0 0 29 30"><ellipse cx="14.500" cy="15" rx="14.500" ry="15" fill="#d3121f" /><ellipse cx="14.500" cy="15" rx="6" ry="11.500" fill="#f0eff2" /></svg>
        </Slot>
        <Slot>
          <ActiveTile />
          <SlotIcon>
            <svg width="31" height="30" viewBox="0 0 31 30">
              <path d="M8 0h23v7.500H8z" fill="#41a5ee" /><path d="M8 7.500h23V15H8z" fill="#2b7cd3" /><path d="M8 15h23v7.500H8z" fill="#185abd" /><path d="M8 22.500h23V30H8z" fill="#103f91" />
              <rect x="0" y="8" width="15" height="15" rx="1" fill="#185abd" />
              <text x="2" y="20" fontSize="12" fontWeight="700" fill="#fff" fontFamily="Liberation Sans">W</text>
            </svg>
          </SlotIcon>
          <Dot $active />
        </Slot>
        <Slot>
          <svg width="30" height="30" viewBox="0 0 30 30">
            <circle cx="16" cy="15" r="14" fill="#f28d1f" />
            <circle cx="16.500" cy="15" r="13.500" fill="#2c2255" />
            <path d="M3 11.500h27M3 15h27M3 18.500h27" stroke="#f5f5f5" strokeWidth="2" />
          </svg>
          <Dot />
        </Slot>

        <Tray>
          <TrayItem $ml={0} $w={16}>
            <svg width="16" height="9" viewBox="0 0 16 9"><path d="M.5 8.500 8 1l7.500 7.500" fill="none" stroke="#222" strokeWidth="1.200" /></svg>
          </TrayItem>
          <TrayItem $ml={12} $w={20}>
            <svg width="20" height="15" viewBox="0 0 20 15"><path d="M4 14a3.500 3.500 0 0 1-.6-7 5.500 5.500 0 0 1 10.300-2 4.500 4.500 0 0 1 5.800 5.500C19.500 13 18 14 16 14z" fill="#9a9a9a" stroke="#444" strokeWidth=".8" /></svg>
          </TrayItem>
          <TrayItem $ml={10} $w={20}>
            <svg width="20" height="20" viewBox="0 0 20 20"><path d="M1 9a7 7 0 0 1 13-4M15 1v4h-4M3 14h4M3 14v4" fill="none" stroke="#222" /><circle cx="15" cy="14.500" r="5" fill="#f58a07" /></svg>
          </TrayItem>
          <Lang $ml={18}>ENG<br />IN</Lang>
          <TrayItem $ml={22} $w={20}>
            <svg width="20" height="15" viewBox="0 0 20 15"><path d="M1 5a13 13 0 0 1 18 0M4 8a9 9 0 0 1 12 0M7 11a4.500 4.500 0 0 1 6 0" fill="none" stroke="#111" strokeWidth="1.200" /><circle cx="10" cy="13.500" r="1.300" fill="#111" /></svg>
          </TrayItem>
          <TrayItem $ml={10} $w={19}>
            <svg width="19" height="14" viewBox="0 0 19 14"><path d="M.5 4.500h3L8 1v12L3.500 9.500h-3zM12 4.500l5.500 5.500M17.500 4.500 12 10" fill="none" stroke="#222" /></svg>
          </TrayItem>
          <TrayItem $ml={11} $w={20}>
            <svg width="20" height="12" viewBox="0 0 20 12"><rect x=".7" y=".7" width="16.600" height="10.600" rx="2" fill="none" stroke="#111" strokeWidth="1.300" /><rect x="3" y="3" width="10" height="6" fill="#111" /><path d="M18 4h2v4h-2z" fill="#111" /></svg>
          </TrayItem>
          <Clock>21:22<br />24-09-2022</Clock>
          <Badge>2</Badge>
        </Tray>
      </Taskbar>
    </Window>
  )
}

export default App
